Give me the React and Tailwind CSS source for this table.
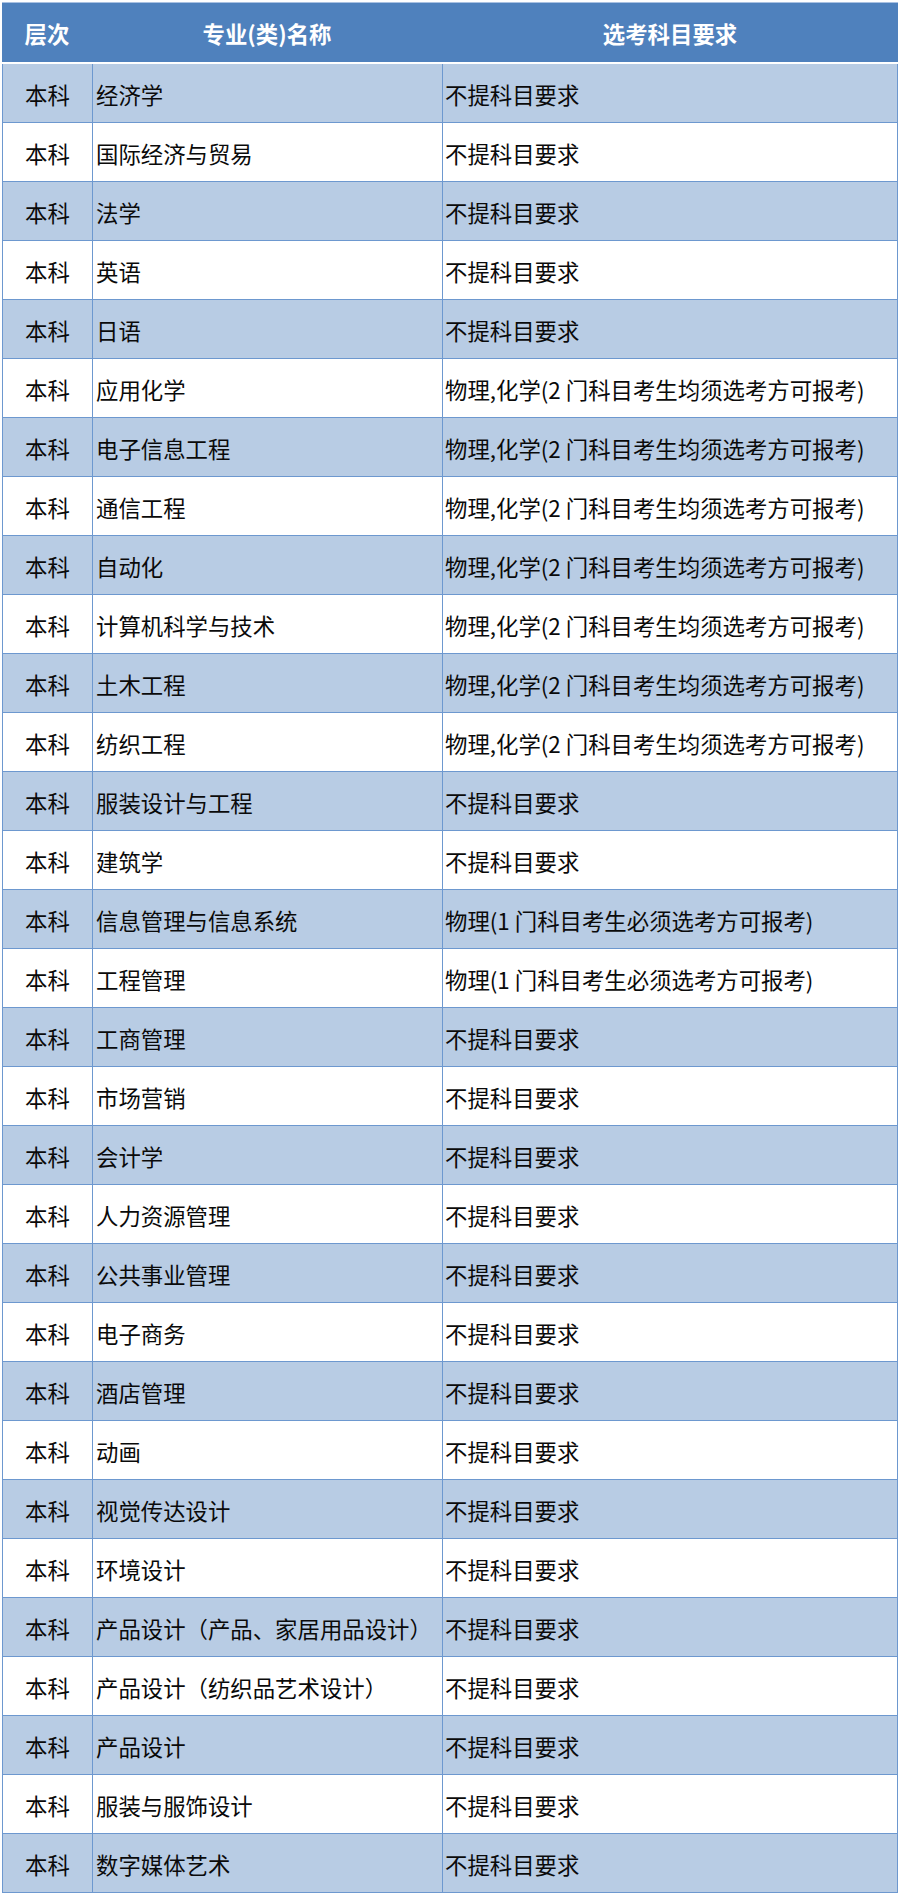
const rows = [
  ["经济学", "不提科目要求"],
  ["国际经济与贸易", "不提科目要求"],
  ["法学", "不提科目要求"],
  ["英语", "不提科目要求"],
  ["日语", "不提科目要求"],
  ["应用化学", "物理,化学(2 门科目考生均须选考方可报考)"],
  ["电子信息工程", "物理,化学(2 门科目考生均须选考方可报考)"],
  ["通信工程", "物理,化学(2 门科目考生均须选考方可报考)"],
  ["自动化", "物理,化学(2 门科目考生均须选考方可报考)"],
  ["计算机科学与技术", "物理,化学(2 门科目考生均须选考方可报考)"],
  ["土木工程", "物理,化学(2 门科目考生均须选考方可报考)"],
  ["纺织工程", "物理,化学(2 门科目考生均须选考方可报考)"],
  ["服装设计与工程", "不提科目要求"],
  ["建筑学", "不提科目要求"],
  ["信息管理与信息系统", "物理(1 门科目考生必须选考方可报考)"],
  ["工程管理", "物理(1 门科目考生必须选考方可报考)"],
  ["工商管理", "不提科目要求"],
  ["市场营销", "不提科目要求"],
  ["会计学", "不提科目要求"],
  ["人力资源管理", "不提科目要求"],
  ["公共事业管理", "不提科目要求"],
  ["电子商务", "不提科目要求"],
  ["酒店管理", "不提科目要求"],
  ["动画", "不提科目要求"],
  ["视觉传达设计", "不提科目要求"],
  ["环境设计", "不提科目要求"],
  ["产品设计（产品、家居用品设计）", "不提科目要求"],
  ["产品设计（纺织品艺术设计）", "不提科目要求"],
  ["产品设计", "不提科目要求"],
  ["服装与服饰设计", "不提科目要求"],
  ["数字媒体艺术", "不提科目要求"],
];

const App = () => {
  return (
    <div className="w-[900px] h-[1893px] bg-white px-[2px] pt-[2px] font-['Noto_Sans_CJK_SC',sans-serif] text-[22.4px] text-[#0a0a0a]">
      {/* HEADER */}
      <div className="h-[60px] border-t border-[#a9c1e2] bg-[#4f81bd] grid grid-cols-[90px_350px_1fr] font-bold text-white">
        <div className="flex items-center justify-center pt-[3px]">层次</div>
        <div className="flex items-center justify-center pt-[3px]">专业(类)名称</div>
        <div className="flex items-center justify-center pt-[3px]">选考科目要求</div>
      </div>
      <div className="h-[2px]" />

      {/* ROWS */}
      {rows.map(([name, req], i) => (
        <div
          key={i}
          className={
            "h-[59px] grid grid-cols-[90px_350px_1fr] border-l border-r border-b border-[#6d98cf] " +
            (i % 2 === 0 ? "bg-[#b8cce4]" : "bg-white")
          }
        >
          <div className="flex items-center justify-center border-r border-[#6d98cf] pt-[3px]">本科</div>
          <div className="flex items-center pl-[3px] border-r border-[#6d98cf] pt-[3px] whitespace-nowrap">{name}</div>
          <div className="flex items-center pl-[2px] pt-[3px] whitespace-nowrap">{req}</div>
        </div>
      ))}
    </div>
  );
};

export default App;
